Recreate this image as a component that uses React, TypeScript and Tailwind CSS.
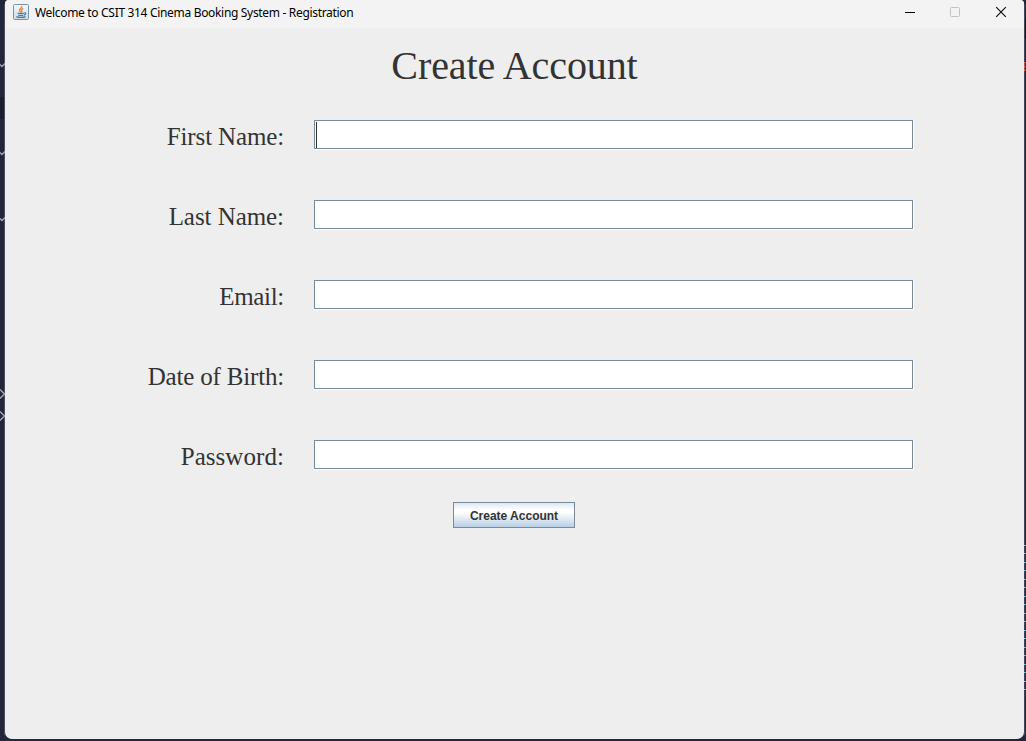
const fields = [
  { label: "First Name:", spacing: "tracking-[-0.14px]", focused: true },
  { label: "Last Name:", spacing: "tracking-[-0.06px]", focused: false },
  { label: "Email:", spacing: "tracking-[-0.32px]", focused: false },
  { label: "Date of Birth:", spacing: "tracking-[-0.18px]", focused: false },
  { label: "Password:", spacing: "tracking-[0.06px]", focused: false },
];

const rightMarks = [545, 553, 562, 570, 579, 587, 596, 604, 613, 621, 630, 638, 647, 655, 664, 672, 681, 689];

function JavaIcon() {
  return (
    <svg width="16" height="16" viewBox="0 0 16 16" className="block">
      <defs>
        <linearGradient id="tile" x1="0" y1="0" x2="0" y2="1">
          <stop offset="0" stopColor="#f4f7fa" />
          <stop offset="1" stopColor="#cddbe6" />
        </linearGradient>
      </defs>
      <rect x="0.5" y="0.5" width="15" height="15" rx="1" fill="url(#tile)" stroke="#7593ab" />
      <path d="M8.8 2C9.4 4 6 4.6 6.6 6.5C6.8 7.2 7.6 7.8 7.8 8.4M10.3 4.6C8.6 5.2 7.8 6 8.7 7.1C9 7.6 8.8 8.1 8.5 8.4" fill="none" stroke="#ee852d" strokeWidth="1.3" />
      <path d="M4.6 9.4H10.8M5.3 11.3H10.3M11.3 8.8C13.4 8.5 13 10.6 11 11M3.4 12.6C5.5 13.8 10.5 13.7 12.5 12.6" fill="none" stroke="#527b9b" strokeWidth="1.3" />
    </svg>
  );
}

function Backdrop() {
  return (
    <svg width="1026" height="741" className="absolute inset-0" fill="none">
      <path d="M0 0H5V741H0Z" fill="#23263a" />
      <path d="M0 97H4V119H0Z" fill="#1b1c2d" />
      <path d="M4.5 4V735" stroke="#4b4e5c" />
      <path d="M1024.5 4V735" stroke="#414959" />
      <path d="M1025.5 19V38" stroke="#11121c" />
      <path d="M0 64.5L2 66.5L5 63.5M0 152.5L2 154.5L5 151.5M0 218.5L2 220.5L5 217.5M0 389.5L4.5 394L0 398.5M0 411.5L4.5 416L0 420.5" stroke="#a7adb4" strokeWidth="1.3" />
      <path d="M1024 62.5H1026M1024.5 62V71M1024 66.5H1026M1024 70.5H1026" stroke="#b95f51" />
      {rightMarks.map((y) => (
        <path key={y} d={`M1024 ${y + 0.5}H1026`} stroke="#81b7c8" />
      ))}
    </svg>
  );
}

export default function App() {
  return (
    <div className="relative h-[741px] w-[1026px] overflow-hidden bg-[#23263a] pl-[5px]">
      <Backdrop />
      <main className="relative flex h-[739px] w-[1019px] flex-col overflow-hidden rounded-t-[4px] rounded-b-[7px] bg-[#eeeeee] text-[#333333]">
        <header className="flex h-7 shrink-0 items-start bg-[#f3f3f3] pr-[5px] pl-2 text-black">
          <div className="pt-1"><JavaIcon /></div>
          <div className="ml-1.5 pt-1 font-['Noto_Sans',sans-serif] text-[12px] leading-[18px] tracking-[-0.32px] whitespace-nowrap">
            Welcome to CSIT 314 Cinema Booking System - Registration
          </div>
          <svg width="119" height="28" className="ml-auto shrink-0" fill="none">
            <path d="M5 12.5H15" stroke="#000" />
            <rect x="50.5" y="7.5" width="9" height="9" rx="1" stroke="#c3c3c3" />
            <path d="M96.2 7.2L105.8 16.8M105.8 7.2L96.2 16.8" stroke="#111" strokeWidth="1.2" />
          </svg>
        </header>
        <h1 className="mt-[15px] h-[46px] text-center font-['Liberation_Serif',serif] text-[40px] leading-[46px] tracking-[-0.1px]">
          Create Account
        </h1>
        <form className="mt-[31px] flex flex-col">
          <div className="flex flex-col gap-[50px]">
            {fields.map((f) => (
              <label key={f.label} className="flex h-[30px]">
                <span className={`w-[279px] shrink-0 text-right font-['Liberation_Serif',serif] text-[25px] leading-[34px] whitespace-nowrap ${f.spacing}`}>
                  {f.label}
                </span>
                <span className="ml-[30px] flex h-[30px] w-[600px] border-r border-b border-white">
                  <span className="flex h-[29px] w-[599px] border border-[#7a8a99] bg-white pt-px pl-px">
                    {f.focused && <span className="h-[26px] w-px bg-[#333333]" />}
                  </span>
                </span>
              </label>
            ))}
          </div>
          <button
            type="button"
            className="mt-8 mr-px h-[26px] w-[122px] self-center border border-[#7a8a99] bg-[linear-gradient(to_bottom,#dde8f3_0%,#ffffff_30%,#ffffff_40%,#b8cfe5_100%)] pt-0.5 font-['Liberation_Sans',sans-serif] text-[12px] leading-[22px] font-bold"
          >
            Create Account
          </button>
        </form>
      </main>
    </div>
  );
}
